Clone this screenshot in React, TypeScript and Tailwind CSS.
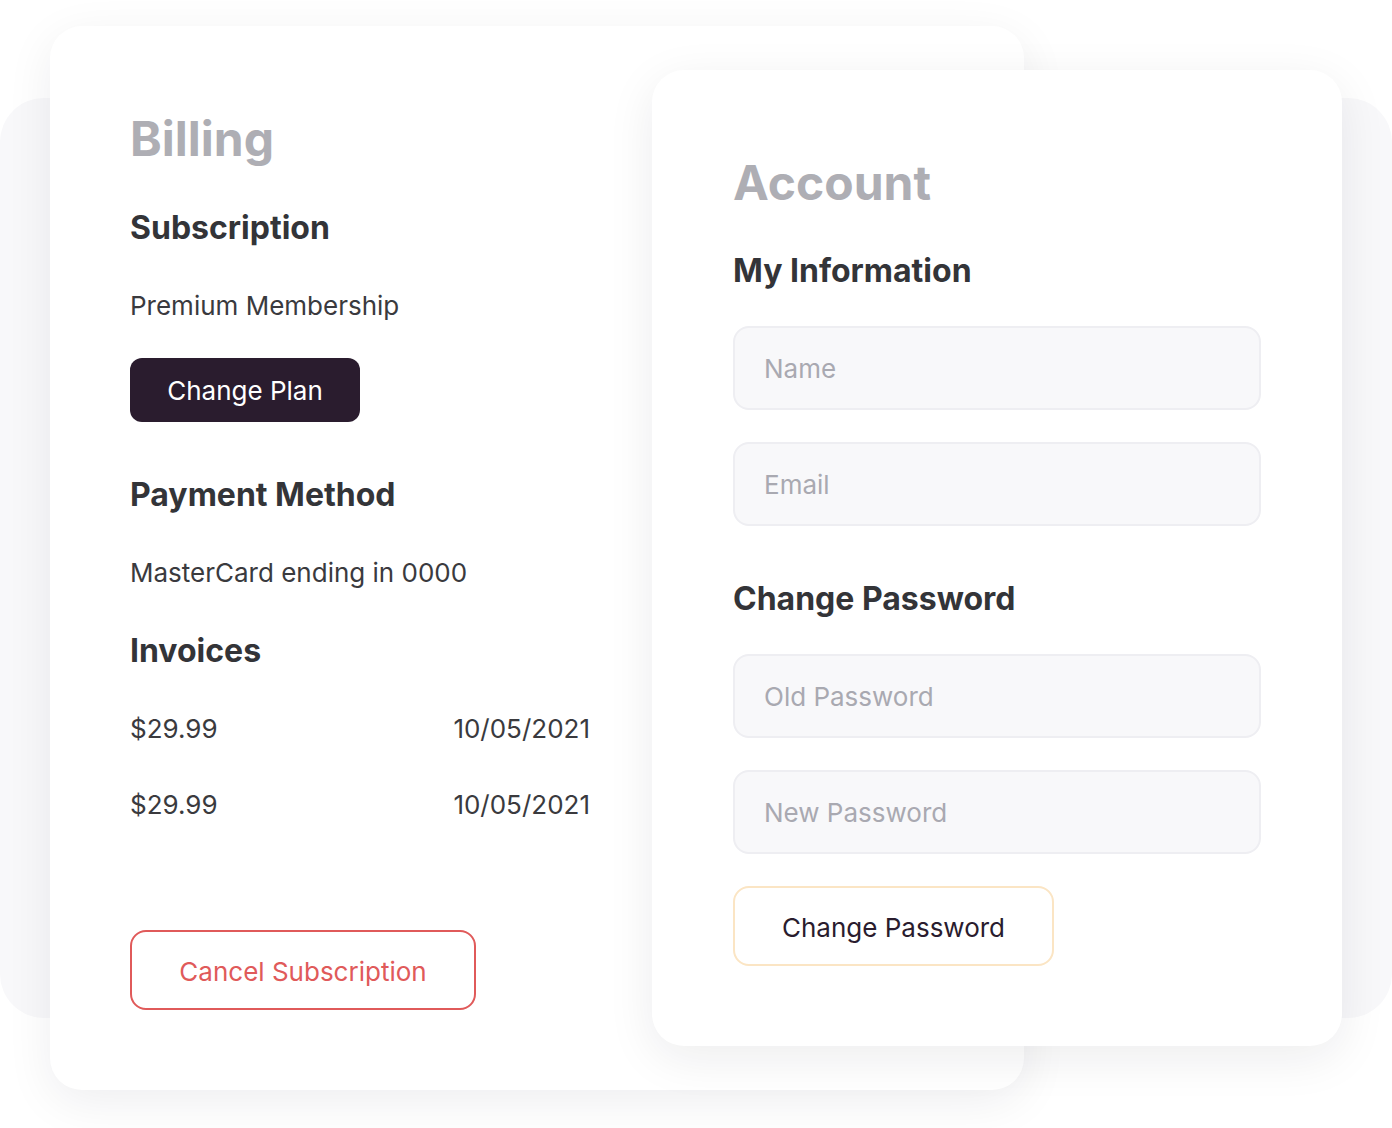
import React from "react";

const font = { fontFamily: "Inter, 'Noto Sans', sans-serif" };

function Field({ placeholder, className = "" }: { placeholder: string; className?: string }) {
  return (
    <input
      placeholder={placeholder}
      className={`block w-[528px] h-[84px] rounded-[16px] border-2 border-[#eeeef2] bg-[#f8f8fa] px-[29px] text-[26px] text-[#333438] placeholder:text-[#a9a9b1] outline-none ${className}`}
    />
  );
}

export default function App() {
  return (
    <div style={font} className="bg-white w-[1392px] h-[1128px] overflow-hidden grid">
      <div className="col-start-1 row-start-1 mt-[98px] w-[1392px] h-[920px] rounded-[44px] bg-[#f8f8fa]" />

      <div className="col-start-1 row-start-1 self-start ml-[50px] mt-[26px] w-[974px] h-[1064px] rounded-[32px] bg-white shadow-[0_12px_48px_rgba(20,20,40,0.07)] pl-[80px] pt-[84px]">
        <h1 className="text-[48px] leading-[58px] font-bold text-[#aeaeb4]">Billing</h1>
        <h2 className="mt-[40px] text-[32px] leading-[40px] font-bold text-[#333438]">Subscription</h2>
        <p className="mt-[42px] text-[26px] leading-[32px] text-[#3a3a3e]">Premium Membership</p>
        <button className="mt-[36px] w-[230px] h-[64px] pt-[2px] rounded-[12px] bg-[#2a1c2e] text-white text-[26px] leading-[32px]">Change Plan</button>
        <h2 className="mt-[53px] text-[32px] leading-[40px] font-bold text-[#333438]">Payment Method</h2>
        <p className="mt-[42px] text-[26px] leading-[32px] text-[#3a3a3e]">MasterCard ending in 0000</p>
        <h2 className="mt-[42px] text-[32px] leading-[40px] font-bold text-[#333438]">Invoices</h2>
        <div className="mt-[42px] w-[460px] flex justify-between text-[26px] leading-[32px] text-[#3a3a3e]">
          <span>$29.99</span>
          <span>10/05/2021</span>
        </div>
        <div className="mt-[44px] w-[460px] flex justify-between text-[26px] leading-[32px] text-[#3a3a3e]">
          <span>$29.99</span>
          <span>10/05/2021</span>
        </div>
        <button className="mt-[109px] w-[346px] h-[80px] pt-[3px] rounded-[16px] border-2 border-[#e05a5a] bg-white text-[#e05a5a] text-[26px] leading-[32px]">Cancel Subscription</button>
      </div>

      <div className="col-start-1 row-start-1 self-start ml-[652px] mt-[70px] w-[690px] h-[976px] rounded-[32px] bg-white shadow-[0_12px_48px_rgba(20,20,40,0.08)] pl-[81px] pt-[84px]">
        <h1 className="text-[48px] leading-[58px] font-bold text-[#aeaeb4]">Account</h1>
        <h2 className="mt-[39px] text-[32px] leading-[40px] font-bold text-[#333438]">My Information</h2>
        <Field placeholder="Name" className="mt-[35px]" />
        <Field placeholder="Email" className="mt-[32px]" />
        <h2 className="mt-[53px] text-[32px] leading-[40px] font-bold text-[#333438]">Change Password</h2>
        <Field placeholder="Old Password" className="mt-[35px]" />
        <Field placeholder="New Password" className="mt-[32px]" />
        <button className="block mt-[32px] w-[321px] h-[80px] pt-[3px] rounded-[16px] border-2 border-[#fbe5c4] bg-white text-[#2a1c2e] text-[26px] leading-[32px]">Change Password</button>
      </div>
    </div>
  );
}
